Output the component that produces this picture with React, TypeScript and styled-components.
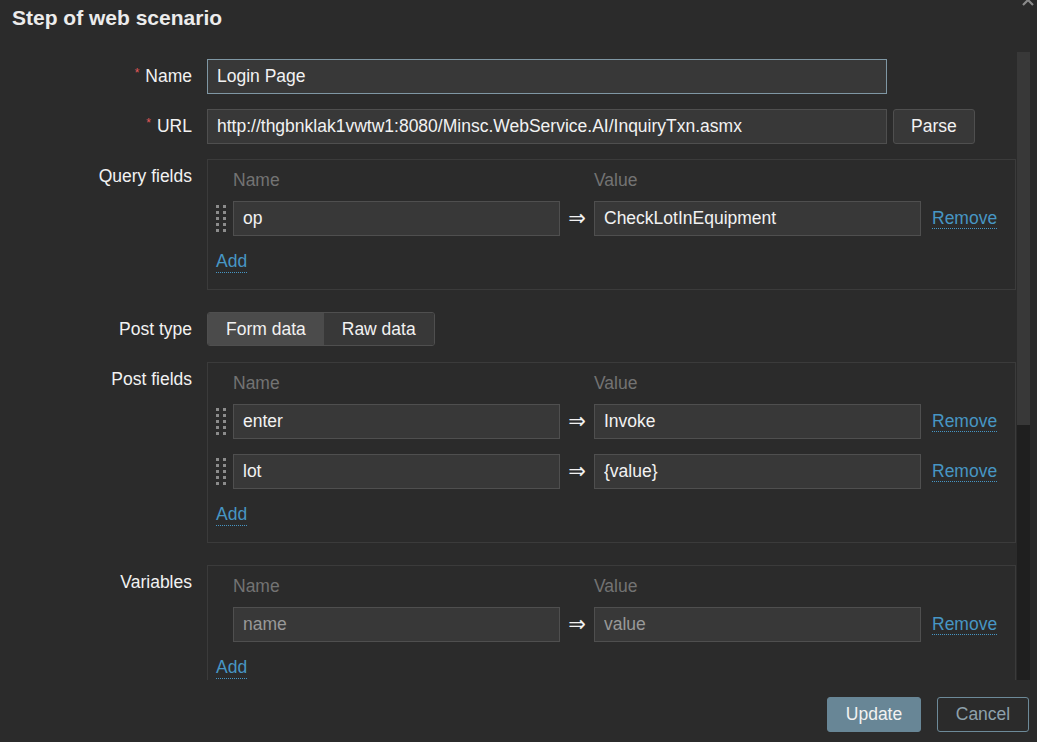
import styled, { createGlobalStyle } from 'styled-components';

const GlobalStyle = createGlobalStyle`
	html, body {
		margin: 0;
		padding: 0;
		background: #2b2b2b;
	}
	body {
		font-family: "Liberation Sans", Arial, sans-serif;
		color: #f2f2f2;
	}
	* {
		box-sizing: border-box;
	}
`;

type Pair = { name: string; value: string };

const queryFields: Pair[] = [{ name: 'op', value: 'CheckLotInEquipment' }];
const postFields: Pair[] = [
	{ name: 'enter', value: 'Invoke' },
	{ name: 'lot', value: '{value}' },
];

const DragHandle = () => (
	<svg width="10" height="27" viewBox="0 0 10 27">
		{[0, 1, 2, 3, 4].map((r) =>
			[0, 7].map((x) => (
				<rect key={`${r}-${x}`} x={x} y={r * 6} width="3" height="3" fill="#8c8c8c" />
			))
		)}
	</svg>
);

const PairTable = ({
	rows,
	sortable,
	placeholder,
}: {
	rows: Pair[];
	sortable?: boolean;
	placeholder?: boolean;
}) => (
	<Box>
		<PairRow>
			<span />
			<ColumnHead>Name</ColumnHead>
			<span />
			<ColumnHead>Value</ColumnHead>
		</PairRow>
		<Rows>
			{rows.map((row, i) => (
				<PairRow key={i}>
					<HandleCell>{sortable && <DragHandle />}</HandleCell>
					<TextInput
						$width={327}
						defaultValue={placeholder ? undefined : row.name}
						placeholder={placeholder ? row.name : undefined}
					/>
					<Arrow>⇒</Arrow>
					<TextInput
						$width={327}
						defaultValue={placeholder ? undefined : row.value}
						placeholder={placeholder ? row.value : undefined}
					/>
					<RemoveCell>
						<Link>Remove</Link>
					</RemoveCell>
				</PairRow>
			))}
		</Rows>
		<AddLine>
			<Link>Add</Link>
		</AddLine>
	</Box>
);

const App = () => {
	return (
		<>
			<GlobalStyle />
			<Dialog>
				<Header>
					<Title>Step of web scenario</Title>
					<CloseButton>
						<svg width="14" height="14" viewBox="0 0 14 14">
							<path d="M2 2 L12 12 M12 2 L2 12" stroke="#8a8a8a" strokeWidth="2.2" />
						</svg>
					</CloseButton>
				</Header>
				<Body>
					<ScrollArea>
						<Form>
							<Label>
								<Required>*</Required>Name
							</Label>
							<Field>
								<TextInput $width={680} $focused defaultValue="Login Page" />
							</Field>

							<Label>
								<Required>*</Required>URL
							</Label>
							<Field>
								<TextInput
									$width={680}
									defaultValue="http://thgbnklak1vwtw1:8080/Minsc.WebService.AI/InquiryTxn.asmx"
								/>
								<Button>Parse</Button>
							</Field>

							<Label>Query fields</Label>
							<PairTable rows={queryFields} sortable />

							<Label>Post type</Label>
							<Field>
								<Segmented>
									<Segment $active>Form data</Segment>
									<Segment>Raw data</Segment>
								</Segmented>
							</Field>

							<Label>Post fields</Label>
							<PairTable rows={postFields} sortable />

							<Label>Variables</Label>
							<PairTable rows={[{ name: 'name', value: 'value' }]} placeholder />
						</Form>
					</ScrollArea>
					<ScrollTrack>
						<ScrollThumb />
					</ScrollTrack>
				</Body>
				<Footer>
					<Button $primary $width={94}>
						Update
					</Button>
					<Button $ghost $width={92}>
						Cancel
					</Button>
				</Footer>
			</Dialog>
		</>
	);
};

const Dialog = styled.div`
	position: relative;
	width: 1037px;
	height: 742px;
	display: flex;
	flex-direction: column;
	background: #2b2b2b;
	overflow: hidden;
`;

const Header = styled.div`
	height: 52px;
	flex-shrink: 0;
	padding: 6px 12px 0;
`;

const Title = styled.h1`
	margin: 0;
	font-size: 21px;
	line-height: 24px;
	font-weight: 700;
	color: #ececec;
`;

const CloseButton = styled.div`
	position: absolute;
	top: -7px;
	right: 2px;
	width: 14px;
	height: 14px;
	display: flex;
`;

const Body = styled.div`
	height: 628px;
	display: flex;
	flex-shrink: 0;
`;

const ScrollArea = styled.div`
	width: 1017px;
	height: 100%;
	overflow: hidden;
	padding: 7px 1px 0 0;
`;

const ScrollTrack = styled.div`
	width: 13px;
	height: 100%;
	background: #1f1f1f;
	display: flex;
	flex-direction: column;
`;

const ScrollThumb = styled.div`
	height: 373px;
	background: #383838;
`;

const Form = styled.div`
	display: grid;
	grid-template-columns: 192px 809px;
	column-gap: 15px;
	row-gap: 15px;
	align-items: start;
`;

const Label = styled.div`
	height: 35px;
	text-align: right;
	font-size: 17.5px;
	line-height: 35px;
	white-space: nowrap;
	color: #f2f2f2;
`;

const Required = styled.span`
	color: #e45959;
	font-size: 12px;
	line-height: 0;
	position: relative;
	top: -5px;
	margin-right: 6px;
`;

const Field = styled.div`
	display: flex;
	gap: 6px;
	align-items: center;
`;

const TextInput = styled.input<{ $width: number; $focused?: boolean }>`
	width: ${({ $width }) => $width}px;
	height: 35px;
	padding: 0 9px;
	background: #383838;
	border: 1px solid ${({ $focused }) => ($focused ? '#7f97a4' : '#4f4f4f')};
	border-radius: 0;
	color: #f2f2f2;
	font-family: "Liberation Sans", Arial, sans-serif;
	font-size: 17.5px;
	outline: none;

	&::placeholder {
		color: #999999;
	}
`;

const Button = styled.button<{ $primary?: boolean; $ghost?: boolean; $width?: number }>`
	height: 35px;
	${({ $width }) => ($width ? `width: ${$width}px;` : 'padding: 0 17px;')}
	border-radius: 3px;
	font-family: "Liberation Sans", Arial, sans-serif;
	font-size: 17.5px;
	cursor: pointer;
	background: ${({ $primary, $ghost }) => ($primary ? '#688696' : $ghost ? 'transparent' : '#383838')};
	border: 1px solid ${({ $primary, $ghost }) => ($primary ? '#688696' : $ghost ? '#6d8a99' : '#4f4f4f')};
	color: ${({ $ghost }) => ($ghost ? '#8ea1ab' : '#f2f2f2')};
`;

const Segmented = styled.div`
	display: inline-flex;
	height: 34px;
	border: 1px solid #4f4f4f;
	border-radius: 3px;
	overflow: hidden;
`;

const Segment = styled.div<{ $active?: boolean }>`
	padding: 0 18px;
	line-height: 32px;
	font-size: 17.5px;
	color: #f2f2f2;
	background: ${({ $active }) => ($active ? '#4b4b4b' : '#383838')};
`;

const Box = styled.div`
	border: 1px solid #3b3b3b;
	padding: 7px 16px 14px 8px;
	margin-bottom: 7px;
	display: flex;
	flex-direction: column;
`;

const Rows = styled.div`
	display: flex;
	flex-direction: column;
	gap: 15px;
	margin-top: 8px;
`;

const PairRow = styled.div`
	display: grid;
	grid-template-columns: 17px 327px 34px 327px 1fr;
	align-items: center;
`;

const ColumnHead = styled.div`
	font-size: 17.5px;
	line-height: 26px;
	color: #737373;
`;

const HandleCell = styled.div`
	display: flex;
	align-items: center;
	height: 35px;
`;

const Arrow = styled.div`
	text-align: center;
	font-family: "DejaVu Sans", sans-serif;
	font-size: 21px;
	line-height: 35px;
	color: #f2f2f2;
`;

const RemoveCell = styled.div`
	padding-left: 11px;
`;

const Link = styled.span`
	font-size: 17.5px;
	color: #4796c4;
	border-bottom: 1px dotted #4796c4;
	cursor: pointer;
`;

const AddLine = styled.div`
	height: 26px;
	margin-top: 13px;
	display: flex;
	align-items: center;
`;

const Footer = styled.div`
	display: flex;
	justify-content: flex-end;
	gap: 16px;
	padding: 17px 8px 0 0;
`;

export default App;
